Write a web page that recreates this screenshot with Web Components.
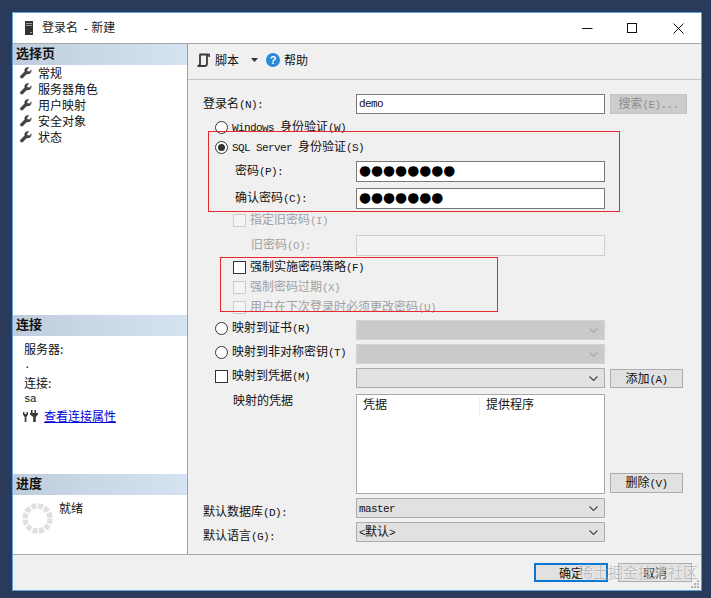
<!DOCTYPE html>
<html lang="zh">
<head>
<meta charset="utf-8">
<title>登录名 - 新建</title>
<style>
    html, body { margin: 0; height: 100%; background: #2a3a5a; }
    body {
        padding: 12px 0 0 12px;
        box-sizing: border-box;
        font: 12px/14px "Noto Sans CJK SC", "Liberation Sans", sans-serif;
        color: #111;
    }
</style>
</head>
<body>
<app-window>
    <title-bar slot="title" text="登录名 - 新建"></title-bar>

    <side-section slot="side" heading="选择页" grow>
        <page-item text="常规"></page-item>
        <page-item text="服务器角色"></page-item>
        <page-item text="用户映射"></page-item>
        <page-item text="安全对象"></page-item>
        <page-item text="状态"></page-item>
    </side-section>
    <side-section slot="side" heading="连接" size="159">
        <conn-info></conn-info>
    </side-section>
    <side-section slot="side" heading="进度" size="80">
        <progress-info text="就绪"></progress-info>
    </side-section>

    <tool-bar slot="tools"></tool-bar>

    <login-form slot="form">
        <form-row top="14" h="20" lift="0">
            <ui-text slot="label" text="登录名(N):"></ui-text>
            <ui-field slot="ctl" text="demo"></ui-field>
            <ui-button slot="side" off text="搜索(E)..."></ui-button>
        </form-row>
        <form-row top="3" h="20" indent="12" lift="0">
            <ui-mark slot="label" kind="radio" text="Windows 身份验证(W)"></ui-mark>
        </form-row>
        <form-row h="20" indent="12" lift="0">
            <ui-mark slot="label" kind="radio" on text="SQL Server 身份验证(S)"></ui-mark>
        </form-row>
        <form-row top="4" h="21" indent="32" lift="2">
            <ui-text slot="label" text="密码(P):"></ui-text>
            <ui-field slot="ctl" dots="●●●●●●●●"></ui-field>
        </form-row>
        <form-row top="6" h="21" indent="32" lift="2">
            <ui-text slot="label" text="确认密码(C):"></ui-text>
            <ui-field slot="ctl" dots="●●●●●●●"></ui-field>
        </form-row>
        <form-row top="1" h="20" indent="30" lift="0">
            <ui-mark slot="label" kind="check" off text="指定旧密码(I)"></ui-mark>
        </form-row>
        <form-row top="5" h="21" indent="48" lift="2">
            <ui-text slot="label" off text="旧密码(O):"></ui-text>
            <ui-field slot="ctl" off></ui-field>
        </form-row>
        <form-row top="1" h="20" indent="30" lift="0">
            <ui-mark slot="label" kind="check" text="强制实施密码策略(F)"></ui-mark>
        </form-row>
        <form-row h="20" indent="30" lift="0">
            <ui-mark slot="label" kind="check" off text="强制密码过期(X)"></ui-mark>
        </form-row>
        <form-row h="20" indent="30" lift="0">
            <ui-mark slot="label" kind="check" off text="用户在下次登录时必须更改密码(U)"></ui-mark>
        </form-row>
        <form-row top="3" h="20" indent="12" lift="4">
            <ui-mark slot="label" kind="radio" text="映射到证书(R)"></ui-mark>
            <ui-combo slot="ctl" off></ui-combo>
        </form-row>
        <form-row top="4" h="20" indent="12" lift="4">
            <ui-mark slot="label" kind="radio" text="映射到非对称密钥(T)"></ui-mark>
            <ui-combo slot="ctl" off></ui-combo>
        </form-row>
        <form-row top="4" h="20" indent="12" lift="4">
            <ui-mark slot="label" kind="check" text="映射到凭据(M)"></ui-mark>
            <ui-combo slot="ctl"></ui-combo>
            <ui-button slot="side" text="添加(A)" style="margin-top:1px"></ui-button>
        </form-row>
        <form-row top="6" h="100" indent="30" start>
            <ui-text slot="label" text="映射的凭据" style="margin-top:-1px"></ui-text>
            <cred-list slot="ctl"></cred-list>
            <ui-button slot="side" text="删除(V)" style="height:20px;align-self:end;margin-bottom:1px"></ui-button>
        </form-row>
        <form-row top="4" h="20" lift="-7">
            <ui-text slot="label" text="默认数据库(D):"></ui-text>
            <ui-combo slot="ctl" mono text="master"></ui-combo>
        </form-row>
        <form-row top="4" h="20" lift="-7">
            <ui-text slot="label" text="默认语言(G):"></ui-text>
            <ui-combo slot="ctl" text="&lt;默认&gt;"></ui-combo>
        </form-row>
        <red-box style="left:20px;top:51px;width:412px;height:81px"></red-box>
        <red-box style="left:32px;top:177px;width:278px;height:55px"></red-box>
    </login-form>

    <dialog-foot slot="foot"></dialog-foot>
</app-window>

<script>
    // text helper: the half-width latin runs are narrower than the CJK font's own
    const fmt = (s) => (s || '').replace(/&/g, '&amp;').replace(/</g, '&lt;').replace(/>/g, '&gt;')
        .replace(/(?:[\x20-\x25\x27-\x3a\x3d\x3f-\x7e]|&lt;|&gt;|&amp;)+/g, (m) => `<span class="l">${m}</span>`);
    const latin = `.l{font:11px/14px "Liberation Mono",monospace;letter-spacing:-.6px;}`;

    function comp(name, render) {
        customElements.define(name, class extends HTMLElement {
            connectedCallback() {
                if (this.shadowRoot) return;
                this.attachShadow({mode: 'open'}).innerHTML = render(this);
            }
        });
    }

    const wrench = `<svg width="12" height="12" viewBox="0 0 12 12"><path fill="#444" d="M11.4 2.6 9.3 4.6 7.5 4.3 7.2 2.6 9.3.6C7.8 0 6.200.3 5.300 1.300 4.400 2.200 4.200 3.500 4.600 4.600L.6 8.600C-.1 9.300-.1 10.300.5 11 1.200 11.600 2.200 11.600 2.900 11L6.900 7C8.100 7.400 9.400 7.100 10.300 6.200 11.300 5.300 11.700 3.900 11.400 2.600Z"/></svg>`;

    comp('app-window', () => `<style>
        :host{display:grid;position:relative;box-sizing:border-box;width:690px;height:579px;border:1px solid #5aa3dc;
            background:#f0f0f0;grid-template-columns:175px 1fr;grid-template-rows:31px 1fr 36px;}
        .t{grid-column:1/3;display:block}
        .side{display:flex;flex-direction:column;background:#fff;border-right:1px solid #a0a0a0;min-height:0}
        .main{display:flex;flex-direction:column;min-height:0}
        .f{grid-column:1/3;display:block}
        .mark{position:absolute;left:565px;top:550px;font-size:15px;line-height:18px;letter-spacing:0;color:rgba(110,110,110,.42);
            text-shadow:0 0 2px #fff;white-space:nowrap;pointer-events:none}
        .grip{position:absolute;right:1px;bottom:1px}
    </style>
    <div class="t"><slot name="title"></slot></div>
    <div class="side"><slot name="side"></slot></div>
    <div class="main"><slot name="tools"></slot><slot name="form"></slot></div>
    <div class="f"><slot name="foot"></slot></div>
    <div class="mark">稀土掘金技术社区</div>
    <svg class="grip" width="10" height="10" viewBox="0 0 10 10" fill="#b5b5b5">
        <rect x="7" y="1" width="2" height="2"/><rect x="4" y="4" width="2" height="2"/><rect x="7" y="4" width="2" height="2"/>
        <rect x="1" y="7" width="2" height="2"/><rect x="4" y="7" width="2" height="2"/><rect x="7" y="7" width="2" height="2"/>
    </svg>`);

    comp('title-bar', (el) => `<style>
        :host{display:flex;align-items:center;box-sizing:border-box;height:31px;background:#fff;border-bottom:1px solid #a8a8a8;padding-left:12px;color:#222}
        ${latin}
        .l{letter-spacing:-2.200px}
        .txt{margin-left:9px;flex:1}
        .btn{width:45.5px;display:flex;justify-content:center}
    </style>
    <svg width="8" height="14" viewBox="0 0 8 14"><rect width="8" height="14" fill="#333"/><rect x="1" y="2" width="6" height="1" fill="#999"/><rect x="1" y="4" width="6" height="1" fill="#999"/><rect x="5" y="11" width="2" height="1" fill="#aaa"/></svg>
    <span class="txt">${fmt(el.getAttribute('text'))}</span>
    <span class="btn"><svg width="11" height="11" viewBox="0 0 11 11"><path d="M0 5.500H10.500" stroke="#111"/></svg></span>
    <span class="btn"><svg width="11" height="11" viewBox="0 0 11 11"><rect x=".5" y=".5" width="9" height="9" fill="none" stroke="#111"/></svg></span>
    <span class="btn"><svg width="11" height="11" viewBox="0 0 11 11"><path d="M.5.5 10.500 10.500M10.500.5.5 10.500" stroke="#111" fill="none"/></svg></span>`);

    comp('side-section', (el) => {
        const size = el.getAttribute('size');
        return `<style>
        :host{display:flex;flex-direction:column;${el.hasAttribute('grow') ? 'flex:1;' : `height:${size}px;flex:none;`}}
        h2{margin:0;height:21px;flex:none;box-sizing:border-box;padding:1px 0 0 3px;font-size:13px;line-height:15px;font-weight:700;color:#111;
            background:linear-gradient(90deg,#bfccdb 0,#c9d7e6 45%,#d4e2f1 100%)}
    </style><h2>${el.getAttribute('heading')}</h2><slot></slot>`;
    });

    comp('page-item', (el) => `<style>
        :host{display:flex;align-items:center;height:16px;padding-left:7px;gap:6px}
        svg{flex:none}
    </style>${wrench}<span>${el.getAttribute('text')}</span>`);

    comp('conn-info', () => `<style>
        :host{display:flex;flex-direction:column;padding:6px 0 0 11px}
        ${latin}
        .d{height:14px}
        .s{height:12px}
        .gap{margin-top:6px}
        .lnk{display:flex;align-items:center;gap:6px;margin:7px 0 0 -1px}
        a{color:#0000d8;text-decoration:underline}
    </style>
    <div>服务器:</div>
    <div class="d"><span class="l">.</span></div>
    <div class="gap">连接:</div>
    <div class="s"><span class="l">sa</span></div>
    <div class="lnk">
        <svg width="15" height="13" viewBox="0 0 15 13" fill="#3a3a3a"><path d="M0 2h1.500v2h2V2H5v2.500L3.400 7v5H1.700V7L0 4.500Z"/><path d="M8 0h1.500v3h2V0H13v3h2v1.500L12.800 7v5h-2.600V7L7 4.500V3h1Z"/></svg>
        <a href="#">查看连接属性</a>
    </div>`);

    comp('progress-info', (el) => `<style>
        :host{display:flex;padding:6px 0 0 9px;gap:6px}
        svg{flex:none}
    </style>
    <svg width="31" height="31" viewBox="0 0 31 31" style="margin-top:2px"><circle cx="15.500" cy="15.500" r="12.500" fill="none" stroke="#e0e0e0" stroke-width="5.500" stroke-dasharray="5 1.545"/></svg>
    <span>${el.getAttribute('text')}</span>`);

    comp('tool-bar', () => `<style>
        :host{display:flex;align-items:center;flex:none;box-sizing:border-box;height:36px;border-bottom:1px solid #c4c4c4;padding:0 0 3px 9px}
        .a{margin-left:5px}
        .c{margin-left:12px}
        .h{margin:0 4px 0 8px}
    </style>
    <svg width="13" height="14" viewBox="0 0 13 14" fill="none" stroke="#3a3a3a" stroke-width="1.800"><path d="M2.500 1.500H12.500M3 1.500V11C3 12.600 2.200 13 .5 13H7.500C9.300 13 10 12 10 10.500V1.500M12.300 1.500V4"/></svg>
    <span class="a">脚本</span>
    <svg class="c" width="7" height="4" viewBox="0 0 7 4"><path d="M0 0H7L3.500 4Z" fill="#333"/></svg>
    <svg class="h" width="14" height="14" viewBox="0 0 14 14"><circle cx="7" cy="7" r="7" fill="#2a8ad8"/><text x="7" y="11" text-anchor="middle" fill="#fff" font-size="11" font-weight="700" font-family="Liberation Sans, sans-serif">?</text></svg>
    <span>帮助</span>`);

    comp('login-form', () => `<style>
        :host{display:flex;flex-direction:column;position:relative;flex:1;padding-left:15px}
    </style><slot></slot>`);

    comp('form-row', (el) => {
        const top = el.getAttribute('top') || 0, h = el.getAttribute('h'), indent = el.getAttribute('indent') || 0;
        const lift = +el.getAttribute('lift') || 0, start = el.hasAttribute('start');
        return `<style>
        :host{display:grid;grid-template-columns:153px 249px 5px 77px;grid-template-rows:${h}px;height:${h}px;margin-top:${top}px;flex:none}
        .lab{padding-left:${indent}px;display:flex;align-items:${start ? 'flex-start' : 'center'};box-sizing:border-box;white-space:nowrap;
            min-height:0;transform:translateY(${-lift / 2}px)}
        .ctl{display:block;min-width:0;min-height:0}
        .sd{grid-column:4;display:flex;min-width:0;min-height:0}
    </style>
    <div class="lab"><slot name="label"></slot></div>
    <div class="ctl"><slot name="ctl"></slot></div>
    <div class="sd"><slot name="side"></slot></div>`;
    });

    comp('ui-text', (el) => `<style>
        :host{display:block;${el.hasAttribute('off') ? 'color:#a0a0a0;' : ''}}
        ${latin}
    </style>${fmt(el.getAttribute('text'))}`);

    comp('ui-mark', (el) => {
        const off = el.hasAttribute('off'), radio = el.getAttribute('kind') === 'radio';
        const box = radio
            ? `<svg width="13" height="13" viewBox="0 0 13 13"><circle cx="6.500" cy="6.500" r="6" fill="#fff" stroke="#333"/>${el.hasAttribute('on') ? '<circle cx="6.500" cy="6.500" r="3.500" fill="#333"/>' : ''}</svg>`
            : `<svg width="13" height="13" viewBox="0 0 13 13"><rect x=".5" y=".5" width="12" height="12" fill="${off ? '#f4f4f4' : '#fff'}" stroke="${off ? '#ccc' : '#333'}"/></svg>`;
        return `<style>
        :host{display:flex;align-items:center;gap:4px;${off ? 'color:#a0a0a0;' : ''}}
        svg{flex:none}
        ${latin}
    </style>${box}<span>${fmt(el.getAttribute('text'))}</span>`;
    });

    comp('ui-field', (el) => {
        const off = el.hasAttribute('off'), dots = el.getAttribute('dots');
        return `<style>
        :host{display:flex;align-items:center;box-sizing:border-box;height:100%;padding:0 0 1px 2px;
            background:${off ? '#f3f3f3' : '#fff'};border:1px solid ${off ? '#cfcfcf' : '#7a7a7a'}}
        ${latin}
        .d{font:13.800px/14px "DejaVu Sans",sans-serif;color:#000;white-space:nowrap;margin-top:-2px}
    </style>${dots ? `<span class="d">${dots}</span>` : `<span class="l">${el.getAttribute('text') || ''}</span>`}`;
    });

    comp('ui-combo', (el) => {
        const off = el.hasAttribute('off');
        return `<style>
        :host{display:flex;align-items:center;box-sizing:border-box;height:100%;padding:0 6px 0 2px;justify-content:space-between;
            background:${off ? '#cacaca' : '#e1e1e1'};border:1px solid ${off ? '#d4d4d4' : '#adadad'}}
        ${latin}
    </style><span>${fmt(el.getAttribute('text'))}</span>
    <svg width="9" height="5" viewBox="0 0 9 5"><path d="M.5.500 4.500 4.500 8.500.5" fill="none" stroke="${off ? '#a8a8a8' : '#444'}" stroke-width="1.100"/></svg>`;
    });

    comp('ui-button', (el) => {
        const off = el.hasAttribute('off');
        return `<style>
        :host{display:flex;align-items:center;justify-content:center;box-sizing:border-box;width:73px;
            background:${off ? '#cccccc' : '#e1e1e1'};border:1px solid ${off ? '#c4c4c4' : '#adadad'};${off ? 'width:77px;color:#8c8c8c;' : ''}}
        ${latin}
    </style><span>${fmt(el.getAttribute('text'))}</span>`;
    });

    comp('cred-list', () => `<style>
        :host{display:block;box-sizing:border-box;height:100%;background:#fff;border:1px solid #a8a8a8}
        .head{display:grid;grid-template-columns:122px 1fr;padding-top:2px}
        .head span{padding-left:6px;height:18px}
        .head span+span{border-left:1px solid #eee}
    </style><div class="head"><span>凭据</span><span>提供程序</span></div>`);

    comp('red-box', () => `<style>
        :host{display:block;position:absolute;box-sizing:border-box;border:1px solid #e8282e;pointer-events:none}
    </style>`);

    comp('dialog-foot', () => `<style>
        :host{display:flex;box-sizing:border-box;height:36px;border-top:1px solid #a9a9a9;padding:8px 9px 0 0;justify-content:flex-end;gap:10px}
        b{display:flex;align-items:center;justify-content:center;box-sizing:border-box;width:74px;height:19px;font-weight:400;background:#e1e1e1;border:1px solid #adadad}
        b.d{border:2px solid #0a78d2}
    </style><b class="d">确定</b><b>取消</b>`);
</script>
</body>
</html>
